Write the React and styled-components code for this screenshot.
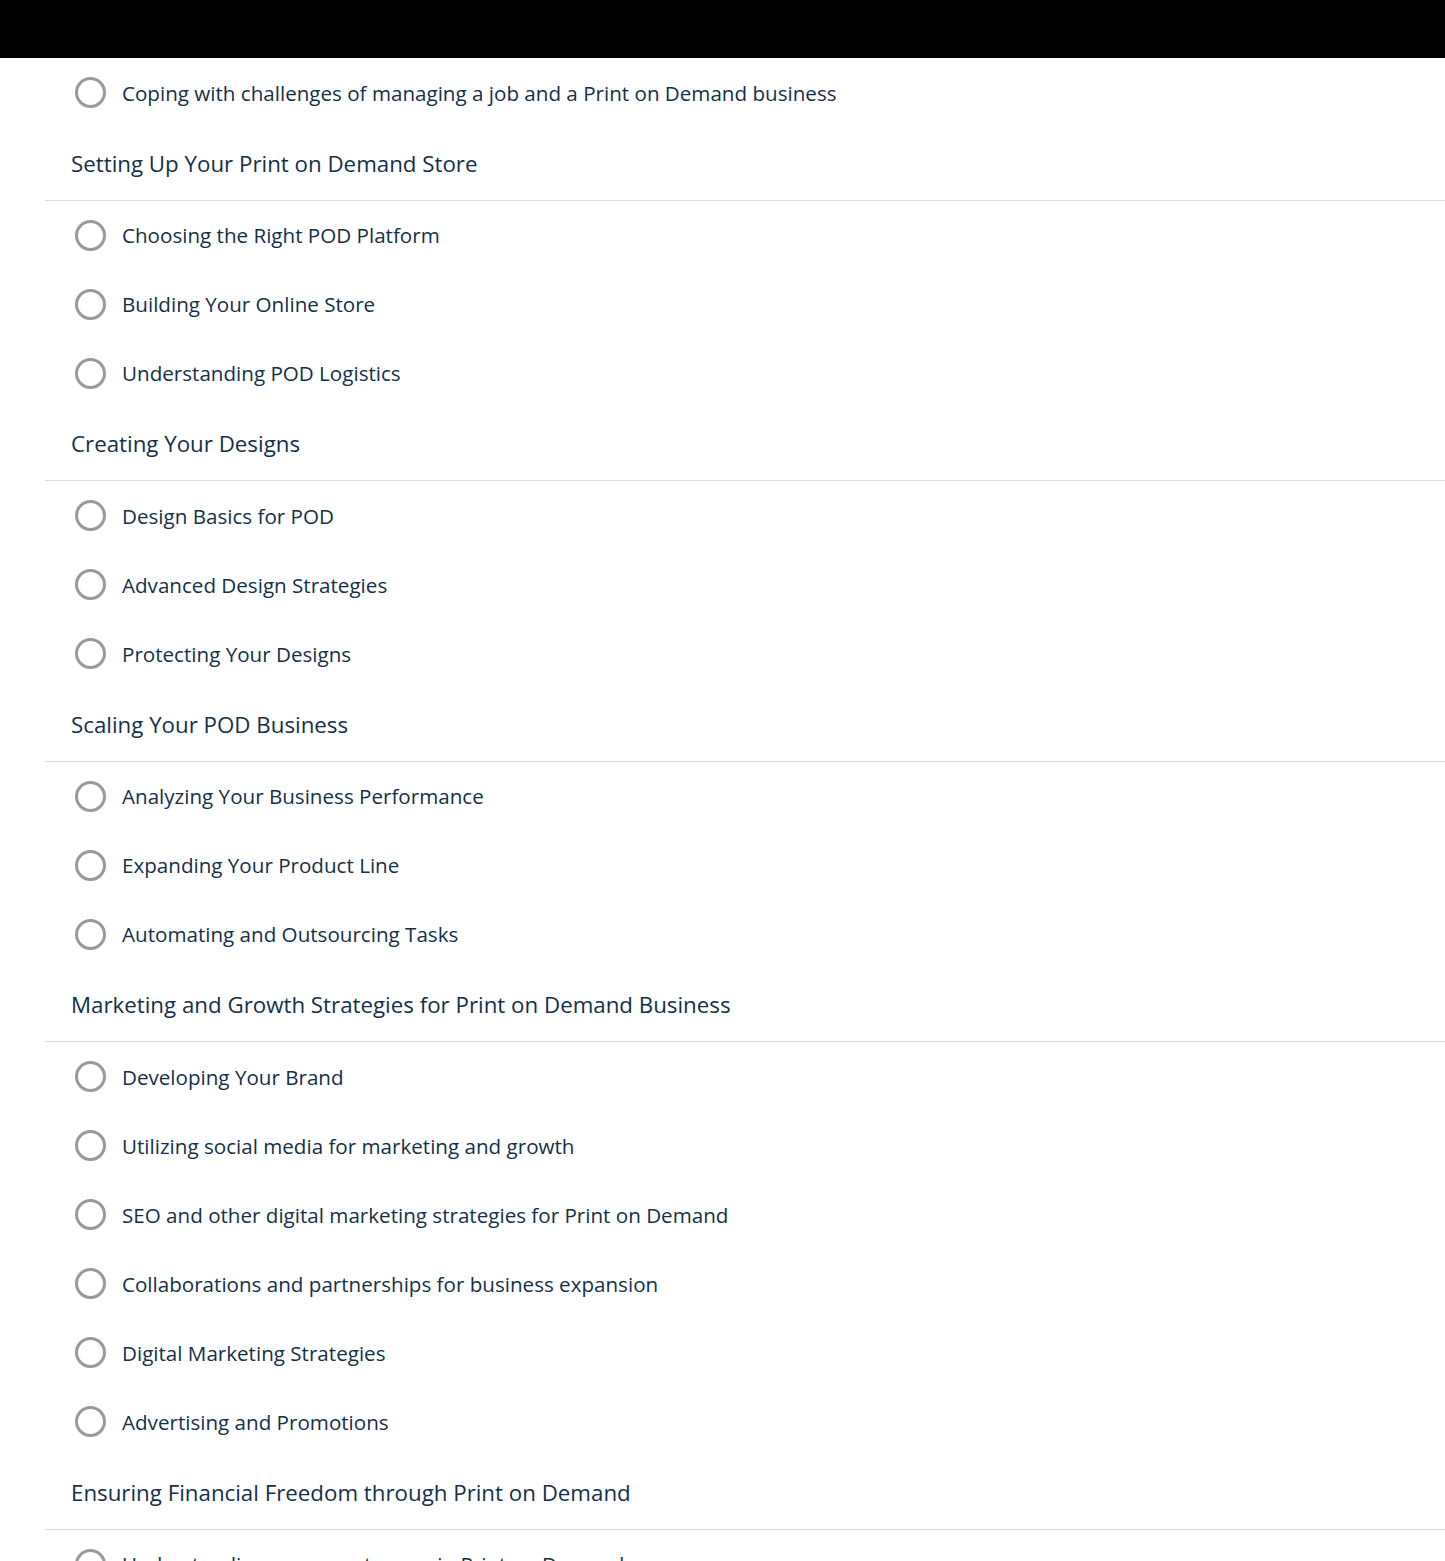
import styled, { createGlobalStyle } from "styled-components";

const GlobalStyle = createGlobalStyle`
  html, body {
    margin: 0;
    padding: 0;
    background: #ffffff;
    overflow: hidden;
  }
  body {
    font-family: "Open Sans", "Noto Sans", sans-serif;
    color: #17304a;
  }
`;

const TopBar = styled.div`
  height: 58px;
  background: #000000;
`;

const Outline = styled.div`
  margin-left: 45px;
  display: flex;
  flex-direction: column;
`;

const SectionTitle = styled.div`
  height: 72.5px;
  display: flex;
  align-items: center;
  padding-left: 26px;
  font-size: 22.3px;
  color: #14304a;
  border-bottom: 1px solid #dcdcdc;
  box-sizing: content-box;
`;

const Lesson = styled.div`
  height: 69px;
  display: flex;
  align-items: center;
  gap: 16px;
  padding-left: 30px;
  font-size: 20.6px;
  color: #14304a;
`;

const Radio = styled.span`
  width: 25px;
  height: 25px;
  flex: none;
  border: 3px solid #9a9a9a;
  border-radius: 50%;
`;

const sections = [
  {
    title: null,
    lessons: ["Coping with challenges of managing a job and a Print on Demand business"],
  },
  {
    title: "Setting Up Your Print on Demand Store",
    lessons: [
      "Choosing the Right POD Platform",
      "Building Your Online Store",
      "Understanding POD Logistics",
    ],
  },
  {
    title: "Creating Your Designs",
    lessons: ["Design Basics for POD", "Advanced Design Strategies", "Protecting Your Designs"],
  },
  {
    title: "Scaling Your POD Business",
    lessons: [
      "Analyzing Your Business Performance",
      "Expanding Your Product Line",
      "Automating and Outsourcing Tasks",
    ],
  },
  {
    title: "Marketing and Growth Strategies for Print on Demand Business",
    lessons: [
      "Developing Your Brand",
      "Utilizing social media for marketing and growth",
      "SEO and other digital marketing strategies for Print on Demand",
      "Collaborations and partnerships for business expansion",
      "Digital Marketing Strategies",
      "Advertising and Promotions",
    ],
  },
  {
    title: "Ensuring Financial Freedom through Print on Demand",
    lessons: ["Understanding revenue streams in Print on Demand"],
  },
];

function App() {
  return (
    <>
      <GlobalStyle />
      <TopBar />
      <Outline>
        {sections.map((section, i) => (
          <div key={i}>
            {section.title && <SectionTitle>{section.title}</SectionTitle>}
            {section.lessons.map((lesson) => (
              <Lesson key={lesson}>
                <Radio />
                <span>{lesson}</span>
              </Lesson>
            ))}
          </div>
        ))}
      </Outline>
    </>
  );
}

export default App;
